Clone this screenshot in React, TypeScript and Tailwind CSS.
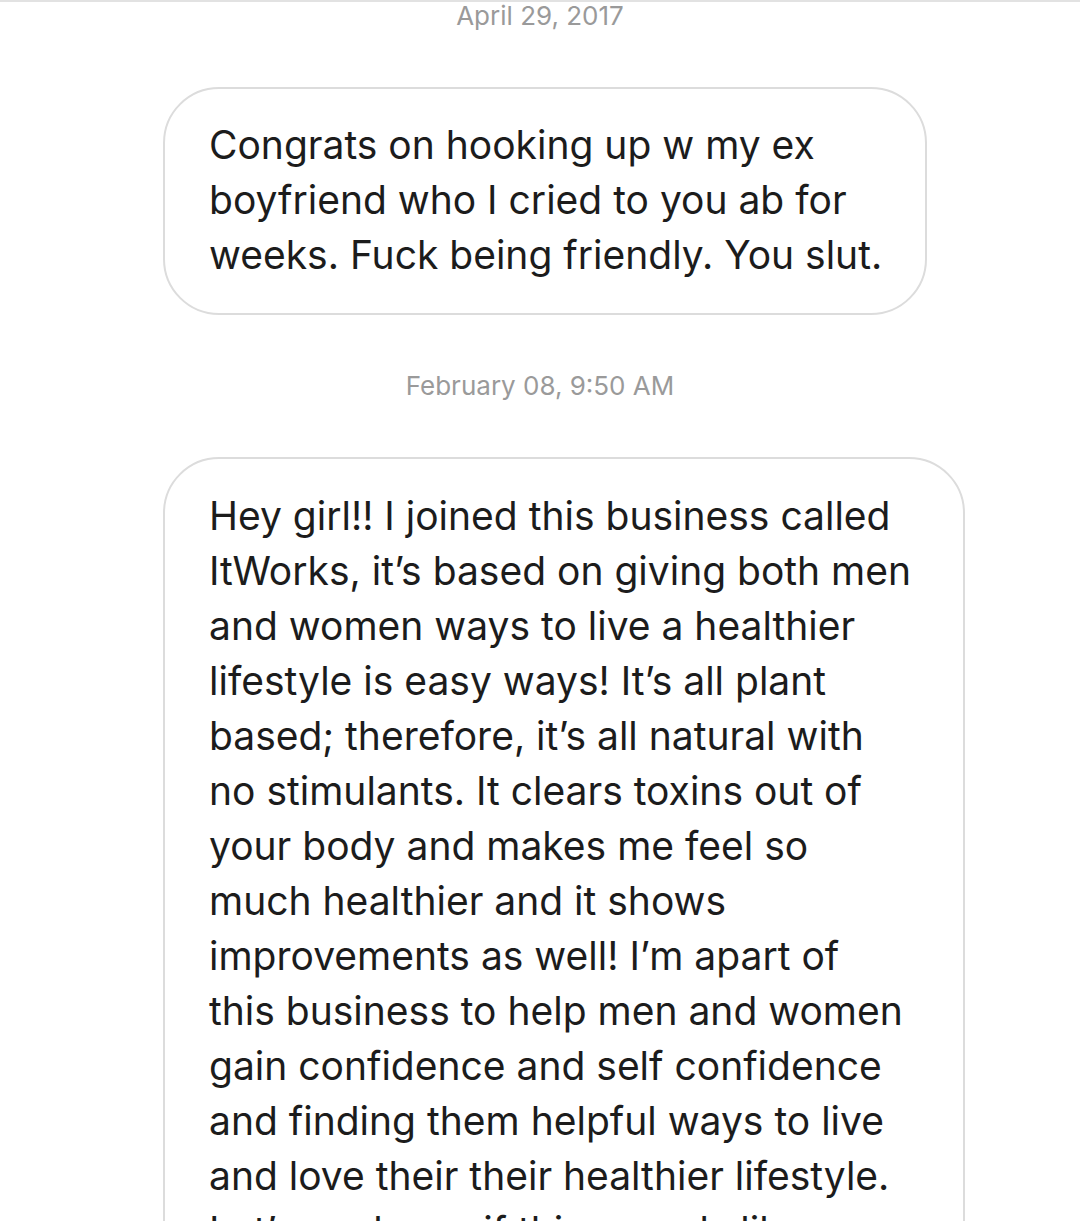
import React from "react";

const msg1 = [
  "Congrats on hooking up w my ex",
  "boyfriend who I cried to you ab for",
  "weeks. Fuck being friendly. You slut.",
];

const msg2 = [
  "Hey girl!! I joined this business called",
  "ItWorks, it\u2019s based on giving both men",
  "and women ways to live a healthier",
  "lifestyle is easy ways! It\u2019s all plant",
  "based; therefore, it\u2019s all natural with",
  "no stimulants. It clears toxins out of",
  "your body and makes me feel so",
  "much healthier and it shows",
  "improvements as well! I\u2019m apart of",
  "this business to help men and women",
  "gain confidence and self confidence",
  "and finding them helpful ways to live",
  "and love their their healthier lifestyle.",
  "Let\u2019s me know if this sounds like",
];

export default function App() {
  return (
    <div
      className="w-[1080px] h-[1221px] overflow-hidden bg-white border-t-2 border-[#e2e2e2]"
      style={{ fontFamily: "Inter, 'Liberation Sans', sans-serif" }}
    >
      <div className="flex flex-col items-start">
        <div className="w-full text-center text-[26px] leading-[30px] text-[#9a9a9a] -mt-[1px]">
          April 29, 2017
        </div>
        <div className="ml-[163px] mt-[56px] w-[764px] rounded-[56px] border-2 border-[#dcdcdc] pl-[44px] pt-[28px] pb-[31px] text-[39px] leading-[55px] text-[#1c1c1c]">
          {msg1.map((l) => (
            <div key={l} className="whitespace-nowrap">{l}</div>
          ))}
        </div>
        <div className="w-full mt-[56px] text-center text-[26px] leading-[30px] text-[#9a9a9a]">
          February 08, 9:50 AM
        </div>
        <div className="ml-[163px] mt-[56px] w-[802px] rounded-[56px] border-2 border-[#dcdcdc] pl-[44px] pt-[29px] pb-[31px] text-[39px] leading-[55px] text-[#1c1c1c]">
          {msg2.map((l) => (
            <div key={l} className="whitespace-nowrap">{l}</div>
          ))}
        </div>
      </div>
    </div>
  );
}
